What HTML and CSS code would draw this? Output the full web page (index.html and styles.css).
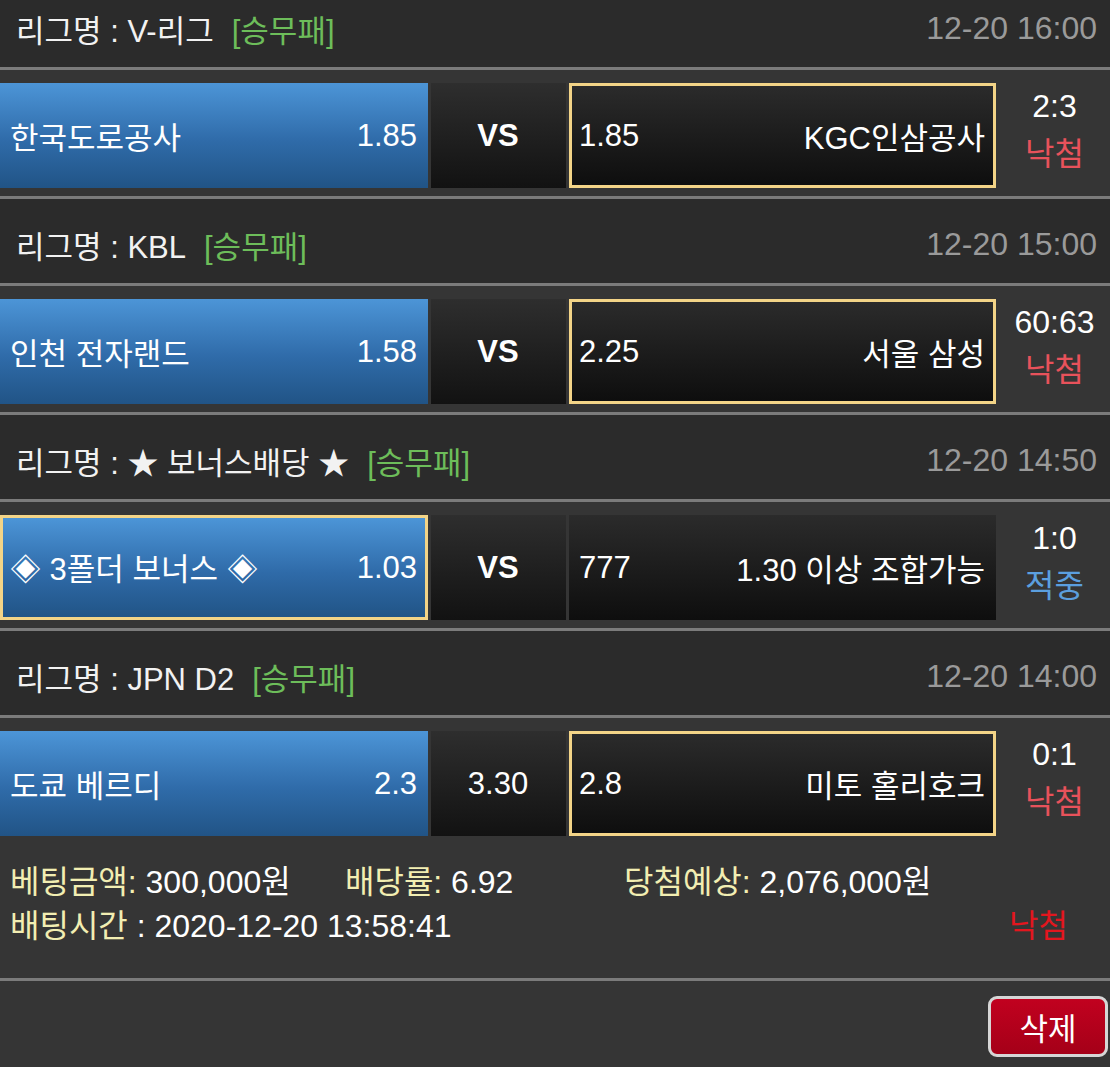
FILE: index.html
```html
<!DOCTYPE html>
<html lang="ko">
<head>
<meta charset="utf-8">
<title>베팅내역</title>
<link rel="stylesheet" href="styles.css">
</head>
<body>
<div class="slip">
  <div class="league first">
    <span class="lname">리그명 : V-리그</span><span class="ltype">[승무패]</span>
    <span class="ldate">12-20 16:00</span>
  </div>
  <div class="match">
    <div class="cell home"><span>한국도로공사</span><span>1.85</span></div>
    <div class="cell mid"><b>VS</b></div>
    <div class="cell away picked"><span>1.85</span><span>KGC인삼공사</span></div>
    <div class="result"><span>2:3</span><span class="lose">낙첨</span></div>
  </div>

  <div class="league">
    <span class="lname">리그명 : KBL</span><span class="ltype">[승무패]</span>
    <span class="ldate">12-20 15:00</span>
  </div>
  <div class="match">
    <div class="cell home"><span>인천 전자랜드</span><span>1.58</span></div>
    <div class="cell mid"><b>VS</b></div>
    <div class="cell away picked"><span>2.25</span><span>서울 삼성</span></div>
    <div class="result"><span>60:63</span><span class="lose">낙첨</span></div>
  </div>

  <div class="league">
    <span class="lname">리그명 : ★ 보너스배당 ★</span><span class="ltype">[승무패]</span>
    <span class="ldate">12-20 14:50</span>
  </div>
  <div class="match">
    <div class="cell home picked"><span>◈ 3폴더 보너스 ◈</span><span>1.03</span></div>
    <div class="cell mid"><b>VS</b></div>
    <div class="cell away"><span>777</span><span>1.30 이상 조합가능</span></div>
    <div class="result"><span>1:0</span><span class="win">적중</span></div>
  </div>

  <div class="league">
    <span class="lname">리그명 : JPN D2</span><span class="ltype">[승무패]</span>
    <span class="ldate">12-20 14:00</span>
  </div>
  <div class="match">
    <div class="cell home"><span>도쿄 베르디</span><span>2.3</span></div>
    <div class="cell mid"><span>3.30</span></div>
    <div class="cell away picked"><span>2.8</span><span>미토 홀리호크</span></div>
    <div class="result"><span>0:1</span><span class="lose">낙첨</span></div>
  </div>

  <div class="summary">
    <div class="srow">
      <span><em>베팅금액:</em> 300,000원</span>
      <span><em>배당률:</em> 6.92</span>
      <span><em>당첨예상:</em> 2,076,000원</span>
    </div>
    <div class="srow second">
      <span><em>배팅시간</em> : 2020-12-20 13:58:41</span>
      <span class="slose">낙첨</span>
    </div>
  </div>

  <div class="footer">
    <button class="del" type="button">삭제</button>
  </div>
</div>
</body>
</html>
```

FILE: styles.css
```css
html, body {
  margin: 0;
  padding: 0;
}
body {
  background: #353535;
  font-family: "Liberation Sans", Arial, "Noto Sans CJK KR", sans-serif;
  color: #fff;
  overflow: hidden;
}
.slip {
  width: 1110px;
}
.league {
  height: 87px;
  box-sizing: border-box;
  border-top: 3px solid #7b7b7b;
  background: #2b2b2b;
  display: flex;
  align-items: center;
  padding: 6px 13px 0 16px;
  font-size: 31px;
}
.league.first {
  margin-top: -20px;
}
.lname {
  color: #f2f2f2;
}
.ltype {
  color: #6dbd5a;
  margin-left: 18px;
}
.ldate {
  margin-left: auto;
  color: #9a9a9a;
  font-size: 32px;
}
.match {
  border-top: 3px solid #7b7b7b;
  background: #353535;
  display: grid;
  grid-template-columns: 428px 135px 427px 1fr;
  grid-template-rows: 105px;
  column-gap: 3px;
  padding: 13px 0 8px 0;
  font-size: 31px;
}
.cell {
  height: 105px;
  box-sizing: border-box;
  display: flex;
  align-items: center;
  justify-content: space-between;
  padding: 0 11px 0 10px;
}
.home {
  background: linear-gradient(#4c95d7, #2f6ba9 55%, #215486);
}
.mid {
  justify-content: center;
  background: linear-gradient(#2e2e2e, #121212);
}
.mid b {
  font-weight: bold;
}
.away {
  background: linear-gradient(#2b2b2b, #0e0e0e);
}
.picked {
  border: 3px solid #f3d487;
  padding: 0 8px 0 7px;
}
.result {
  height: 105px;
  box-sizing: border-box;
  display: flex;
  flex-direction: column;
  align-items: center;
  justify-content: center;
  line-height: 48px;
  padding-bottom: 12px;
  font-size: 32px;
  color: #fff;
}
.lose {
  color: #e8525b;
}
.win {
  color: #5b9fdf;
}
.summary {
  height: 134px;
  box-sizing: border-box;
  padding: 16px 42px 0 10px;
  font-size: 32px;
  line-height: 44px;
}
.srow {
  display: grid;
  grid-template-columns: 335px 279px 1fr;
}
.srow.second {
  grid-template-columns: 1fr auto;
}
.srow em {
  font-style: normal;
  color: #f2eeb2;
}
.slose {
  color: #e3161e;
}
.footer {
  border-top: 3px solid #7b7b7b;
  height: 86px;
  box-sizing: border-box;
  display: flex;
  justify-content: flex-end;
  align-items: flex-start;
  padding: 15px 2px 0 0;
}
.del {
  width: 120px;
  height: 61px;
  box-sizing: border-box;
  border: 3px solid #d6d6d6;
  border-radius: 9px;
  background: linear-gradient(#c1011f, #a50018);
  color: #fff;
  font-family: "Liberation Sans", Arial, "Noto Sans CJK KR", sans-serif;
  font-size: 31px;
  padding: 0;
}
```
